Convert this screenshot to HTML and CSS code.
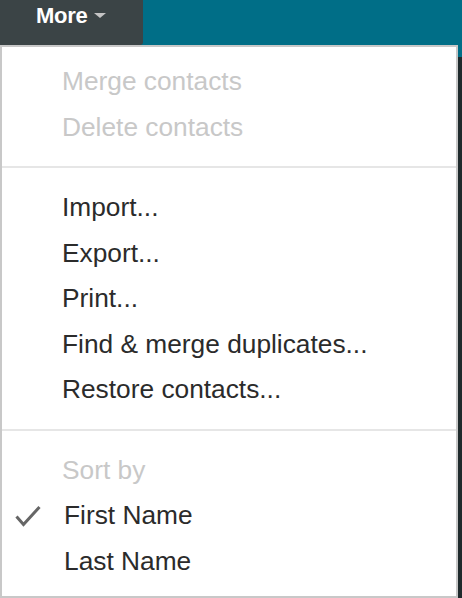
FILE: index.html
```html
<!DOCTYPE html>
<html>
<head>
<meta charset="utf-8">
<link rel="stylesheet" href="styles.css">
</head>
<body>
<div class="page">
  <header class="topbar">
    <div class="more-btn">
      <span class="more-label">More</span>
      <span class="caret"></span>
    </div>
  </header>
  <div class="content"></div>

  <div class="menu">
    <div class="group">
      <div class="item disabled">Merge contacts</div>
      <div class="item disabled">Delete contacts</div>
    </div>
    <div class="sep"></div>
    <div class="group">
      <div class="item">Import...</div>
      <div class="item">Export...</div>
      <div class="item">Print...</div>
      <div class="item">Find &amp; merge duplicates...</div>
      <div class="item">Restore contacts...</div>
    </div>
    <div class="sep"></div>
    <div class="group">
      <div class="item disabled">Sort by</div>
      <div class="item option checked">
        <svg class="check" width="26" height="22" viewBox="0 0 26 22">
          <path d="M1.5 11.5 L8.5 19.5 L24.5 2" fill="none" stroke="#666" stroke-width="3" stroke-linecap="butt" stroke-linejoin="miter"/>
        </svg>
        First Name
      </div>
      <div class="item option">Last Name</div>
    </div>
  </div>
</div>
</body>
</html>
```

FILE: styles.css
```css
html, body {
  margin: 0;
  padding: 0;
}

body {
  width: 462px;
  height: 598px;
  overflow: hidden;
  background: #1f2a2c;
  font-family: "Liberation Sans", Arial, sans-serif;
}

.page {
  position: relative;
  width: 462px;
  height: 598px;
}

.topbar {
  height: 57px;
  background: #006e87;
  display: flex;
  align-items: flex-start;
}

.more-btn {
  width: 143px;
  height: 45px;
  box-sizing: border-box;
  padding-left: 36px;
  background: #3b4446;
  border-bottom-right-radius: 3px;
  display: flex;
  align-items: flex-start;
  gap: 7px;
}

.more-label {
  color: #ffffff;
  font-weight: bold;
  font-size: 22px;
  line-height: 31px;
  letter-spacing: -0.3px;
}

.caret {
  margin-top: 13px;
  width: 0;
  height: 0;
  border-left: 6.5px solid transparent;
  border-right: 6.5px solid transparent;
  border-top: 5.5px solid #c4c4c4;
}

.menu {
  position: absolute;
  top: 45px;
  left: 0;
  width: 458px;
  box-sizing: border-box;
  border: 2px solid #c8c8c8;
  background: #ffffff;
  padding: 12px 0;
}

.item {
  position: relative;
  height: 45.5px;
  line-height: 45.5px;
  padding-left: 60px;
  font-size: 26.3px;
  color: #2b2b2b;
  white-space: nowrap;
}

.item.disabled {
  color: #c8c8c8;
}

.item.option {
  padding-left: 62px;
}

.check {
  position: absolute;
  left: 13px;
  top: 12px;
}

.sep {
  height: 2px;
  background: #e6e6e6;
  margin: 16px 0 17px;
}
```
